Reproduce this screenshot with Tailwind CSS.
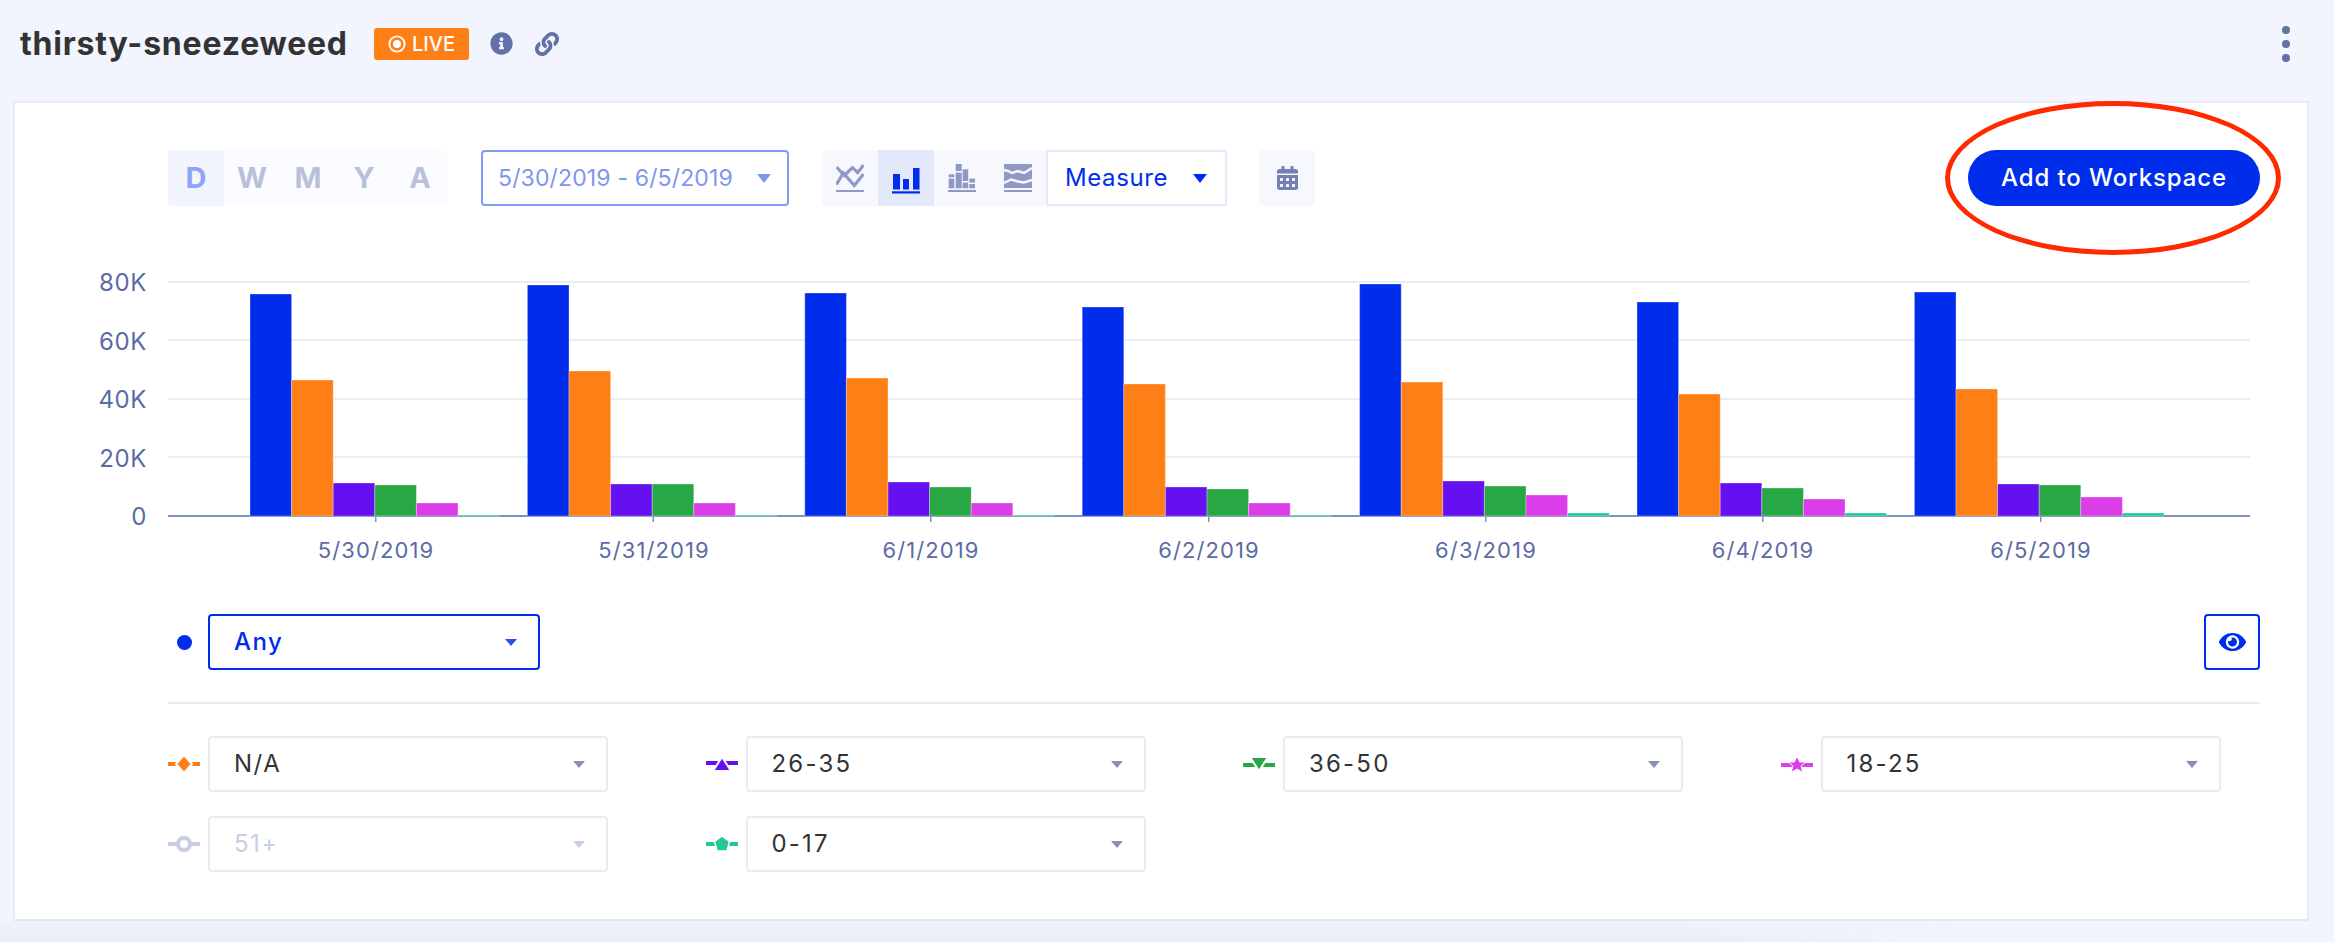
<!DOCTYPE html>
<html>
<head>
<meta charset="utf-8">
<script src="https://cdn.jsdelivr.net/npm/@tailwindcss/browser@4"></script>
</head>
<body class="relative w-[2334px] h-[942px] overflow-hidden bg-[#f2f5fd] font-['Inter',sans-serif]">

<header class="h-[101px] flex items-center pl-[20px] pb-[14px]">
  <h1 class="text-[32px] font-bold text-[#333333] tracking-[0.8px] whitespace-nowrap w-[354px]">thirsty-sneezeweed</h1>
  <span class="flex items-center justify-center gap-[6px] w-[95px] h-[32px] rounded-[3px] bg-[#ff7f17] text-white text-[20px] font-medium">
    <svg width="18" height="18" viewBox="0 0 17 17"><circle cx="8.5" cy="8.5" r="7.2" fill="none" stroke="#fff" stroke-width="1.8"/><circle cx="8.5" cy="8.5" r="3.8" fill="#fff"/></svg>
    LIVE
  </span>
  <svg class="ml-[21px] fill-[#6272a8]" width="23" height="23" viewBox="0 0 512 512"><path d="M256 8C119.043 8 8 119.083 8 256c0 136.997 111.043 248 248 248s248-111.003 248-248C504 119.083 392.957 8 256 8zm0 110c23.196 0 42 18.804 42 42s-18.804 42-42 42-42-18.804-42-42 18.804-42 42-42zm56 254c0 6.627-5.373 12-12 12h-88c-6.627 0-12-5.373-12-12v-24c0-6.627 5.373-12 12-12h12v-64h-12c-6.627 0-12-5.373-12-12v-24c0-6.627 5.373-12 12-12h64c6.627 0 12 5.373 12 12v100h12c6.627 0 12 5.373 12 12v24z"/></svg>
  <svg class="ml-[22px] fill-[#6272a8]" width="24" height="24" viewBox="0 0 512 512"><path d="M326.612 185.391c59.747 59.809 58.927 155.698.36 214.59-.11.12-.24.25-.36.37l-67.2 67.2c-59.27 59.27-155.699 59.262-214.96 0-59.27-59.26-59.27-155.7 0-214.96l37.106-37.106c9.84-9.84 26.786-3.3 27.294 10.606.648 17.722 3.826 35.527 9.69 52.721 1.986 5.822.567 12.262-3.783 16.612l-13.087 13.087c-28.026 28.026-28.905 73.66-1.155 101.96 28.024 28.579 74.086 28.749 102.325.51l67.2-67.19c28.191-28.191 28.073-73.757 0-101.83-3.701-3.694-7.429-6.564-10.341-8.569a16.037 16.037 0 0 1-6.947-12.606c-.396-10.567 3.348-21.456 11.698-29.806l21.054-21.055c5.521-5.521 14.182-6.199 20.584-1.731a152.482 152.482 0 0 1 20.522 17.197zM467.547 44.449c-59.261-59.262-155.69-59.27-214.96 0l-67.2 67.2c-.12.12-.25.25-.36.37-58.566 58.892-59.387 154.781.36 214.59a152.454 152.454 0 0 0 20.521 17.196c6.402 4.468 15.064 3.789 20.584-1.731l21.054-21.055c8.35-8.35 12.094-19.239 11.698-29.806a16.037 16.037 0 0 0-6.947-12.606c-2.912-2.005-6.64-4.875-10.341-8.569-28.073-28.073-28.191-73.639 0-101.83l67.2-67.19c28.239-28.239 74.3-28.069 102.325.51 27.75 28.3 26.872 73.934-1.155 101.96l-13.087 13.087c-4.35 4.35-5.769 10.79-3.783 16.612 5.864 17.194 9.042 34.999 9.69 52.721.509 13.906 17.454 20.446 27.294 10.606l37.106-37.106c59.271-59.259 59.271-155.699.001-214.959z"/></svg>
  <div class="ml-auto mr-[44px] flex flex-col gap-[6px]">
    <span class="block w-[8px] h-[8px] rounded-full bg-[#6272a8]"></span>
    <span class="block w-[8px] h-[8px] rounded-full bg-[#6272a8]"></span>
    <span class="block w-[8px] h-[8px] rounded-full bg-[#6272a8]"></span>
  </div>
</header>

<main class="ml-[13px] w-[2296px] h-[820px] border-2 border-[#e8ebf5] border-b-[#e3e7f1] bg-white">
  <!-- toolbar -->
  <div class="flex items-center h-[56px] mt-[47px] pl-[153px] pr-[47px]">
    <div class="flex rounded-[4px] overflow-hidden bg-[#fbfcff] text-[29px] font-bold text-[#b8c1d9]">
      <span class="w-[56px] h-[56px] flex items-center justify-center bg-[#f2f5fd] text-[#8ea4f5]">D</span>
      <span class="w-[56px] h-[56px] flex items-center justify-center">W</span>
      <span class="w-[56px] h-[56px] flex items-center justify-center">M</span>
      <span class="w-[56px] h-[56px] flex items-center justify-center">Y</span>
      <span class="w-[56px] h-[56px] flex items-center justify-center">A</span>
    </div>
    <div class="ml-[33px] w-[308px] h-[56px] flex items-center justify-between pl-[15px] pr-[16px] border-2 border-[#7f9bf5] rounded-[4px] text-[23px] tracking-[0.15px] text-[#7f96f0]">
      <span class="whitespace-nowrap">5/30/2019 - 6/5/2019</span>
      <svg width="14" height="9" viewBox="0 0 14 9" class="fill-[#7f96f0]"><path d="M0 0H14L7 9Z"/></svg>
    </div>
    <div class="ml-[33px] flex rounded-[4px] overflow-hidden bg-[#f6f8fd]">
      <span class="w-[56px] h-[56px] flex items-center justify-center">
        <svg width="28" height="28" viewBox="0 0 28 28" fill="none" stroke="#9099c5" stroke-width="3.2"><path d="M0.5 3L8.3 11.5L16.5 3.7L21.7 8.7L27.5 1"/><path d="M0.5 20.5L7.3 9L18.3 21.5L27.5 10"/><path d="M0 27H28" stroke-width="2"/></svg>
      </span>
      <span class="w-[56px] h-[56px] flex items-center justify-center bg-[#e3e8fa]">
        <svg width="28" height="28" viewBox="0 0 28 28" class="overflow-visible fill-[#002cec]"><rect x="1" y="10" width="7" height="15.5"/><rect x="11" y="15" width="6" height="10.5"/><rect x="21" y="4" width="6.5" height="21.5"/><rect x="0" y="27.3" width="28" height="2.2"/></svg>
      </span>
      <span class="w-[56px] h-[56px] flex items-center justify-center">
        <svg width="28" height="28" viewBox="0 0 28 28" class="fill-[#9099c5]"><rect x="0.7" y="10.3" width="5.6" height="3"/><rect x="0.7" y="14.6" width="5.6" height="9.7"/><rect x="7.7" y="0" width="6" height="7"/><rect x="7.7" y="8.6" width="6" height="15.7"/><rect x="14.6" y="5.3" width="5.6" height="11.7"/><rect x="14.6" y="18.6" width="5.6" height="5.7"/><rect x="21.3" y="14.6" width="5.7" height="4"/><rect x="21.3" y="20" width="5.7" height="4.3"/><rect x="0" y="26" width="28" height="2"/></svg>
      </span>
      <span class="w-[56px] h-[56px] flex items-center justify-center">
        <svg width="28" height="28" viewBox="0 0 28 28" class="fill-[#9099c5]"><rect x="0" y="0" width="28" height="24"/><path d="M0 6L4 7L8 9L14 7L20 9L28 4" fill="none" stroke="#f6f8fd" stroke-width="2.4"/><path d="M0 19L7 15.5L14 17.5L20 18.5L28 16" fill="none" stroke="#f6f8fd" stroke-width="2.4"/><rect x="0" y="26" width="28" height="2"/></svg>
      </span>
    </div>
    <div class="w-[181px] h-[56px] flex items-center justify-between pl-[17px] pr-[18px] border-2 border-[#e6ebfb] text-[24px] tracking-[0.6px] text-[#002cec]">
      <span>Measure</span>
      <svg width="14" height="9" viewBox="0 0 14 9" class="fill-[#002cec]"><path d="M0 0H14L7 9Z"/></svg>
    </div>
    <span class="ml-[32px] w-[56px] h-[56px] flex items-center justify-center rounded-[4px] bg-[#f6f8fd]">
      <svg width="21" height="24" viewBox="0 0 448 512" class="fill-[#7381b3]"><path d="M0 464c0 26.5 21.5 48 48 48h352c26.5 0 48-21.5 48-48V192H0v272zm320-196c0-6.6 5.4-12 12-12h40c6.6 0 12 5.4 12 12v40c0 6.6-5.4 12-12 12h-40c-6.6 0-12-5.4-12-12v-40zm0 128c0-6.6 5.4-12 12-12h40c6.6 0 12 5.4 12 12v40c0 6.6-5.4 12-12 12h-40c-6.6 0-12-5.4-12-12v-40zM192 268c0-6.6 5.4-12 12-12h40c6.6 0 12 5.4 12 12v40c0 6.6-5.4 12-12 12h-40c-6.6 0-12-5.4-12-12v-40zm0 128c0-6.6 5.4-12 12-12h40c6.6 0 12 5.4 12 12v40c0 6.6-5.4 12-12 12h-40c-6.6 0-12-5.4-12-12v-40zM64 268c0-6.6 5.4-12 12-12h40c6.6 0 12 5.4 12 12v40c0 6.6-5.4 12-12 12H76c-6.6 0-12-5.4-12-12v-40zm0 128c0-6.6 5.4-12 12-12h40c6.6 0 12 5.4 12 12v40c0 6.6-5.4 12-12 12H76c-6.6 0-12-5.4-12-12v-40zM400 64h-48V16c0-8.8-7.2-16-16-16h-32c-8.8 0-16 7.2-16 16v48H160V16c0-8.8-7.2-16-16-16h-32c-8.8 0-16 7.2-16 16v48H48C21.5 64 0 85.5 0 112v48h448v-48c0-26.5-21.5-48-48-48z"/></svg>
    </span>
    <button class="ml-auto w-[292px] h-[56px] rounded-full bg-[#002cec] text-white text-[24px] font-medium tracking-[0.9px] whitespace-nowrap">Add to Workspace</button>
  </div>

  <!-- chart -->
  <svg class="block mt-[54px]" width="2292" height="310" viewBox="15 260 2292 310">
    <g class="fill-[#e9edf5]">
      <rect x="168" y="281" width="2082" height="2"/>
      <rect x="168" y="339" width="2082" height="2"/>
      <rect x="168" y="398" width="2082" height="2"/>
      <rect x="168" y="456" width="2082" height="2"/>
    </g>
    <g class="fill-[#8090c0]">
      <rect x="168" y="515" width="2082" height="2"/>
      <rect x="375" y="516" width="1.5" height="6"/>
      <rect x="652.5" y="516" width="1.5" height="6"/>
      <rect x="930" y="516" width="1.5" height="6"/>
      <rect x="1208" y="516" width="1.5" height="6"/>
      <rect x="1485" y="516" width="1.5" height="6"/>
      <rect x="1762" y="516" width="1.5" height="6"/>
      <rect x="2040" y="516" width="1.5" height="6"/>
    </g>
    <g class="stroke-white/30">
      <g transform="translate(250 0)">
        <rect class="fill-[#002cec]" x="0" y="294" width="41.6" height="222"/><rect class="fill-[#ff7f17]" x="41.6" y="380" width="41.6" height="136"/><rect class="fill-[#6510f0]" x="83.2" y="483" width="41.6" height="33"/><rect class="fill-[#28a745]" x="124.8" y="485" width="41.6" height="31"/><rect class="fill-[#db3ee8]" x="166.4" y="503" width="41.6" height="13"/><rect class="fill-[#20c997]" x="208" y="515" width="41.6" height="1"/>
      </g>
      <g transform="translate(527.4 0)">
        <rect class="fill-[#002cec]" x="0" y="285" width="41.6" height="231"/><rect class="fill-[#ff7f17]" x="41.6" y="371" width="41.6" height="145"/><rect class="fill-[#6510f0]" x="83.2" y="484" width="41.6" height="32"/><rect class="fill-[#28a745]" x="124.8" y="484" width="41.6" height="32"/><rect class="fill-[#db3ee8]" x="166.4" y="503" width="41.6" height="13"/><rect class="fill-[#20c997]" x="208" y="515" width="41.6" height="1"/>
      </g>
      <g transform="translate(804.8 0)">
        <rect class="fill-[#002cec]" x="0" y="293" width="41.6" height="223"/><rect class="fill-[#ff7f17]" x="41.6" y="378" width="41.6" height="138"/><rect class="fill-[#6510f0]" x="83.2" y="482" width="41.6" height="34"/><rect class="fill-[#28a745]" x="124.8" y="487" width="41.6" height="29"/><rect class="fill-[#db3ee8]" x="166.4" y="503" width="41.6" height="13"/><rect class="fill-[#20c997]" x="208" y="515" width="41.6" height="1"/>
      </g>
      <g transform="translate(1082.2 0)">
        <rect class="fill-[#002cec]" x="0" y="307" width="41.6" height="209"/><rect class="fill-[#ff7f17]" x="41.6" y="384" width="41.6" height="132"/><rect class="fill-[#6510f0]" x="83.2" y="487" width="41.6" height="29"/><rect class="fill-[#28a745]" x="124.8" y="489" width="41.6" height="27"/><rect class="fill-[#db3ee8]" x="166.4" y="503" width="41.6" height="13"/><rect class="fill-[#20c997]" x="208" y="515" width="41.6" height="1"/>
      </g>
      <g transform="translate(1359.6 0)">
        <rect class="fill-[#002cec]" x="0" y="284" width="41.6" height="232"/><rect class="fill-[#ff7f17]" x="41.6" y="382" width="41.6" height="134"/><rect class="fill-[#6510f0]" x="83.2" y="481" width="41.6" height="35"/><rect class="fill-[#28a745]" x="124.8" y="486" width="41.6" height="30"/><rect class="fill-[#db3ee8]" x="166.4" y="495" width="41.6" height="21"/><rect class="fill-[#20c997]" x="208" y="513" width="41.6" height="3"/>
      </g>
      <g transform="translate(1637 0)">
        <rect class="fill-[#002cec]" x="0" y="302" width="41.6" height="214"/><rect class="fill-[#ff7f17]" x="41.6" y="394" width="41.6" height="122"/><rect class="fill-[#6510f0]" x="83.2" y="483" width="41.6" height="33"/><rect class="fill-[#28a745]" x="124.8" y="488" width="41.6" height="28"/><rect class="fill-[#db3ee8]" x="166.4" y="499" width="41.6" height="17"/><rect class="fill-[#20c997]" x="208" y="513" width="41.6" height="3"/>
      </g>
      <g transform="translate(1914.4 0)">
        <rect class="fill-[#002cec]" x="0" y="292" width="41.6" height="224"/><rect class="fill-[#ff7f17]" x="41.6" y="389" width="41.6" height="127"/><rect class="fill-[#6510f0]" x="83.2" y="484" width="41.6" height="32"/><rect class="fill-[#28a745]" x="124.8" y="485" width="41.6" height="31"/><rect class="fill-[#db3ee8]" x="166.4" y="497" width="41.6" height="19"/><rect class="fill-[#20c997]" x="208" y="513" width="41.6" height="3"/>
      </g>
    </g>
    <g class="fill-[#5a6ba5] text-[24px] tracking-[0.6px]" text-anchor="end">
      <text x="147" y="291">80K</text>
      <text x="147" y="350">60K</text>
      <text x="147" y="408">40K</text>
      <text x="147" y="467">20K</text>
      <text x="147" y="525">0</text>
    </g>
    <g class="fill-[#5a6ba5] text-[22px] tracking-[1.1px]" text-anchor="middle">
      <text x="376" y="558">5/30/2019</text>
      <text x="654" y="558">5/31/2019</text>
      <text x="931" y="558">6/1/2019</text>
      <text x="1209" y="558">6/2/2019</text>
      <text x="1486" y="558">6/3/2019</text>
      <text x="1763" y="558">6/4/2019</text>
      <text x="2041" y="558">6/5/2019</text>
    </g>
  </svg>

  <!-- filter row -->
  <div class="flex items-center mt-[44px] ml-[153px] mr-[47px]">
    <span class="w-[32px] flex justify-center"><span class="block w-[15px] h-[15px] rounded-full bg-[#002cec]"></span></span>
    <div class="ml-[8px] w-[332px] h-[56px] flex items-center justify-between pl-[24px] pr-[21px] border-2 border-[#002cec] rounded-[4px] text-[24px] tracking-[1.5px] font-medium text-[#002cec]">
      <span>Any</span>
      <svg width="12" height="7" viewBox="0 0 12 7" class="fill-[#2a50ea]"><path d="M0 0H12L6 7Z"/></svg>
    </div>
    <span class="ml-auto w-[56px] h-[56px] flex items-center justify-center border-2 border-[#002cec] rounded-[4px]">
      <svg width="27" height="24" viewBox="0 0 576 512" class="fill-[#002cec]"><path d="M572.52 241.4C518.29 135.59 410.93 64 288 64S57.68 135.64 3.48 241.41a32.35 32.35 0 0 0 0 29.19C57.71 376.41 165.07 448 288 448s230.32-71.64 284.52-177.41a32.35 32.35 0 0 0 0-29.19zM288 400a144 144 0 1 1 144-144 143.93 143.93 0 0 1-144 144zm0-240a95.31 95.31 0 0 0-25.31 3.79 47.85 47.85 0 0 1-66.9 66.9A95.78 95.78 0 1 0 288 160z"/></svg>
    </span>
  </div>

  <div class="h-[2px] mt-[32px] ml-[153px] mr-[47px] bg-[#e8ebf2]"></div>

  <!-- series selects -->
  <div class="flex flex-wrap gap-y-[24px] mt-[32px] ml-[153px] w-[2150px] text-[24px] text-[#333333]">
    <div class="w-[537.5px] flex items-center">
      <svg width="32" height="20" viewBox="0 0 32 20"><rect x="0" y="8" width="32" height="4" fill="#ff7f17"/><path d="M16 1L24 10L16 19L8 10Z" fill="#ff7f17" stroke="#fff" stroke-width="2"/></svg>
      <div class="ml-[8px] w-[400px] h-[56px] flex items-center justify-between pl-[24px] pr-[21px] border-2 border-[#e8ebf2] rounded-[4px]">
        <span class="tracking-[1.5px]">N/A</span>
        <svg width="12" height="7" viewBox="0 0 12 7" class="fill-[#8790b8]"><path d="M0 0H12L6 7Z"/></svg>
      </div>
    </div>
    <div class="w-[537.5px] flex items-center">
      <svg width="32" height="20" viewBox="0 0 32 20"><rect x="0" y="7" width="32" height="4" fill="#6510f0"/><path d="M16 3L25 17H7Z" fill="#6510f0" stroke="#fff" stroke-width="2"/></svg>
      <div class="ml-[8px] w-[400px] h-[56px] flex items-center justify-between pl-[24px] pr-[21px] border-2 border-[#e8ebf2] rounded-[4px]">
        <span class="tracking-[2.2px]">26-35</span>
        <svg width="12" height="7" viewBox="0 0 12 7" class="fill-[#8790b8]"><path d="M0 0H12L6 7Z"/></svg>
      </div>
    </div>
    <div class="w-[537.5px] flex items-center">
      <svg width="32" height="20" viewBox="0 0 32 20"><rect x="0" y="9" width="32" height="4" fill="#28a745"/><path d="M16 17L25 3H7Z" fill="#28a745" stroke="#fff" stroke-width="2"/></svg>
      <div class="ml-[8px] w-[400px] h-[56px] flex items-center justify-between pl-[24px] pr-[21px] border-2 border-[#e8ebf2] rounded-[4px]">
        <span class="tracking-[2.2px]">36-50</span>
        <svg width="12" height="7" viewBox="0 0 12 7" class="fill-[#8790b8]"><path d="M0 0H12L6 7Z"/></svg>
      </div>
    </div>
    <div class="w-[537.5px] flex items-center">
      <svg width="32" height="20" viewBox="0 0 32 20"><rect x="0" y="9" width="32" height="4" fill="#db3ee8"/><path d="M16 2L18.6 8H25L20 12L22 18.5L16 15L10 18.5L12 12L7 8H13.4Z" fill="#db3ee8" stroke="#fff" stroke-width="1"/></svg>
      <div class="ml-[8px] w-[400px] h-[56px] flex items-center justify-between pl-[24px] pr-[21px] border-2 border-[#e8ebf2] rounded-[4px]">
        <span class="tracking-[2.2px]">18-25</span>
        <svg width="12" height="7" viewBox="0 0 12 7" class="fill-[#8790b8]"><path d="M0 0H12L6 7Z"/></svg>
      </div>
    </div>
    <div class="w-[537.5px] flex items-center">
      <svg width="32" height="20" viewBox="0 0 32 20"><rect x="0" y="8" width="32" height="4" fill="#c9cfe3"/><circle cx="16" cy="10" r="6" fill="#fff" stroke="#c9cfe3" stroke-width="4"/></svg>
      <div class="ml-[8px] w-[400px] h-[56px] flex items-center justify-between pl-[24px] pr-[21px] border-2 border-[#e8ebf2] rounded-[4px] text-[#c9cfe3]">
        <span class="tracking-[1.5px]">51+</span>
        <svg width="12" height="7" viewBox="0 0 12 7" class="fill-[#c9cfe3]"><path d="M0 0H12L6 7Z"/></svg>
      </div>
    </div>
    <div class="w-[537.5px] flex items-center">
      <svg width="32" height="20" viewBox="0 0 32 20"><rect x="0" y="8" width="32" height="4" fill="#20c997"/><path d="M16 2L23.5 7.5L21 17H11L8.5 7.5Z" fill="#20c997" stroke="#fff" stroke-width="1.5"/></svg>
      <div class="ml-[8px] w-[400px] h-[56px] flex items-center justify-between pl-[24px] pr-[21px] border-2 border-[#e8ebf2] rounded-[4px]">
        <span class="tracking-[2.2px]">0-17</span>
        <svg width="12" height="7" viewBox="0 0 12 7" class="fill-[#8790b8]"><path d="M0 0H12L6 7Z"/></svg>
      </div>
    </div>
  </div>
</main>

<!-- soft shade along the bottom edge -->
<div class="h-[21px] bg-[linear-gradient(to_bottom,#f0f3fb,#e9ecf4)] [mask-image:linear-gradient(to_right,black_72%,transparent_84%)]"></div>

<!-- hand-drawn annotation over the button -->
<div class="absolute left-[1945px] top-[101px] w-[336px] h-[154px] rounded-[50%] border-[5px] border-[#ff2a00]"></div>

</body>
</html>
